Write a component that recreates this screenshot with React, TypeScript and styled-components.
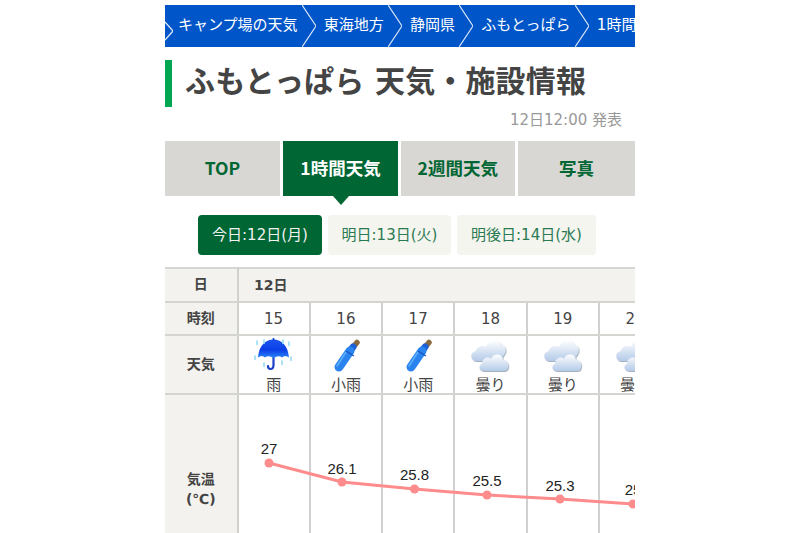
import { useId } from "react";
import styled, { createGlobalStyle } from "styled-components";

const Global = createGlobalStyle`
  html, body { margin: 0; padding: 0; background: #fff; }
  body { font-family: "DejaVu Sans", "Noto Sans CJK JP", sans-serif; color: #444; }
`

const Page = styled.div`
  width: 800px;
  height: 533px;
  overflow: hidden;
  display: flex;
  justify-content: center;
`

const Column = styled.main`
  width: 470px;
  padding-top: 5px;
  overflow: hidden;
`

const Crumbs = styled.nav`
  height: 42px;
  background: #0056c9;
  display: flex;
  align-items: center;
  white-space: nowrap;
  overflow: hidden;
  color: #fff;
  font-size: 15px;
`

const CrumbText = styled.span<{ $first?: boolean }>`
  margin: 0 4.25px 0 ${p => (p.$first ? '5px' : '8px')};
  line-height: 40px;
  height: 42px;
`

const Title = styled.h1`
  margin: 13px 0 0;
  height: 47px;
  border-left: 7px solid #00a651;
  padding-left: 13px;
  font-size: 30px;
  font-weight: 700;
  letter-spacing: 0.15px;
  line-height: 44px;
  color: #444;
  white-space: nowrap;
`

const Published = styled.p`
  margin: 4px 13px 0 0;
  height: 22px;
  text-align: right;
  font-size: 15px;
  line-height: 18px;
  color: #999;
`

const Tabs = styled.div`
  margin-top: 8px;
  display: grid;
  grid-template-columns: 115px 115px 113.5px 118px;
  gap: 3px;
`

const Tab = styled.div<{ $active?: boolean }>`
  position: relative;
  height: 55px;
  padding-bottom: 3px;
  box-sizing: border-box;
  display: flex;
  align-items: center;
  justify-content: center;
  font-family: "Noto Sans CJK JP", sans-serif;
  font-size: 17.5px;
  font-weight: 700;
  background: ${p => (p.$active ? '#006633' : '#d8d7d3')};
  color: ${p => (p.$active ? '#fff' : '#006633')};

  ${p => p.$active && `
    &::after {
      content: "";
      position: absolute;
      left: 50%;
      top: 100%;
      margin-left: -8px;
      border: 8px solid transparent;
      border-bottom: 0;
      border-top: 9px solid #006633;
    }
  `}
`

const Days = styled.div`
  margin-top: 19px;
  padding-left: 33px;
  display: flex;
  gap: 6px;
`

const Day = styled.div<{ $active?: boolean; $width: number }>`
  width: ${p => p.$width}px;
  height: 40px;
  padding-bottom: 3px;
  box-sizing: border-box;
  border-radius: 4px;
  display: flex;
  align-items: center;
  justify-content: center;
  font-size: 15px;
  background: ${p => (p.$active ? '#006633' : '#f4f5ee')};
  color: ${p => (p.$active ? '#f2f2f2' : '#2a7a52')};
`

const TableWrap = styled.div`
  position: relative;
  margin-top: 12px;
  overflow: hidden;
`

const Table = styled.table`
  table-layout: fixed;
  width: 507.1px;
  border-collapse: collapse;
  border-top: 2px solid #d6d6d2;
  font-size: 15px;
  color: #444;
`

const LabelCell = styled.th`
  width: 71.5px;
  padding: 0 0 2px;
  background: #f3f2ee;
  border-bottom: 2px solid #d4d4d0;
  border-right: 2px solid #d0d0cc;
  font-size: 14px;
  font-weight: 700;
  line-height: 20px;
  text-align: center;
  vertical-align: middle;
`

const DayCell = styled.td`
  height: 30px;
  padding: 0 0 2px 15.5px;
  background: #f3f2ee;
  border-bottom: 2px solid #d4d4d0;
  font-size: 14px;
  font-weight: 700;
`

const Cell = styled.td`
  width: 72.6px;
  padding: 0;
  text-align: center;
  border-bottom: 2px solid #d4d4d0;
  border-right: 2px solid #d0d0d0;
`

const HourRow = styled.tr`
  height: 33px;
`

const WeatherRow = styled.tr`
  height: 59px;
`

const TempRow = styled.tr`
  height: 192px;
`

const IconBox = styled.div`
  height: 37px;
  margin-top: 2px;
  display: flex;
  justify-content: center;
  line-height: 0;
`

const Condition = styled.div`
  height: 18px;
  font-size: 15px;
  line-height: 20px;
  color: #444;
`

const ChartLayer = styled.svg`
  position: absolute;
  left: 0;
  top: 0;
  pointer-events: none;
`

const ChartLabel = styled.text`
  font-family: "Liberation Sans", Arial, sans-serif;
  font-size: 15px;
  fill: #222;
  text-anchor: middle;
`

const Chevron = ({ first }: { first?: boolean }) =>
  first ? (
    <svg width="8" height="42" style={{ flex: 'none' }}>
      <path d="M0 17 L8 26 L0 35" fill="none" stroke="#dfe9f8" strokeWidth="1.2" />
    </svg>
  ) : (
    <svg width="14" height="42" style={{ flex: 'none' }}>
      <path d="M0 0 L14 21 L0 42" fill="none" stroke="#dfe9f8" strokeWidth="1.2" />
    </svg>
  )

const Umbrella = () => {
  const id = useId()
  return (
    <svg width="40" height="36" viewBox="0 0 40 36">
      <defs>
        <linearGradient id={id} x1="0" y1="0" x2="0" y2="1">
          <stop offset="0" stopColor="#1a55f0" />
          <stop offset="0.55" stopColor="#0a3ee6" />
          <stop offset="1" stopColor="#2f8af8" />
        </linearGradient>
      </defs>
      <path d="M19.5 18 V27 Q19.5 31 16.5 31 Q14 31 14 28" fill="none" stroke="#1a3fc8" strokeWidth="2.2" strokeLinecap="round" />
      <path d="M19.5 1.5 C28 1.5 34 8 35 19.5 Q31 16.5 28 19.5 Q24 16.5 19.5 20.5 Q15 16.5 11 19.5 Q8 16.5 4 19.5 C5 8 11 1.5 19.5 1.5 Z" fill={`url(#${id})`} />
      <path d="M19.5 0 V3" stroke="#0a3ee6" strokeWidth="1.6" />
      {[[3, 3], [35, 4], [1, 18], [37, 19], [10, 25], [28, 23], [10, 2], [29, 2]].map(([x, y], i) => (
        <path key={i} d={`M${x} ${y} v3.5`} stroke="#93ddf4" strokeWidth="1.6" strokeLinecap="round" />
      ))}
    </svg>
  )
}

const ClosedUmbrella = () => (
  <svg width="40" height="36" viewBox="0 0 40 36">
    <path d="M28 8 L31 4.5" stroke="#8a6b3c" strokeWidth="5.5" strokeLinecap="round" />
    <path d="M24 13 L27 9" stroke="#1d62d8" strokeWidth="7" strokeLinecap="round" />
    <path d="M13 29 L24 13" stroke="#2a84f0" strokeWidth="9" strokeLinecap="round" />
    <path d="M11 28 L20 14" stroke="#5cb0fb" strokeWidth="1.6" strokeLinecap="round" />
    <path d="M20 13 L28 18" stroke="#1450c4" strokeWidth="1.2" />
  </svg>
)

const Cloud = () => {
  const id = useId()
  return (
    <svg width="40" height="36" viewBox="0 0 40 36">
      <defs>
        <linearGradient id={id} x1="0" y1="0" x2="0" y2="1">
          <stop offset="0" stopColor="#fdfeff" />
          <stop offset="1" stopColor="#b4cbe8" />
        </linearGradient>
        <filter id={`${id}s`} x="-20%" y="-20%" width="140%" height="140%">
          <feDropShadow dx="0.6" dy="0.8" stdDeviation="0.7" floodColor="#6d7d92" floodOpacity="0.75" />
        </filter>
      </defs>
      <g filter={`url(#${id}s)`} fill={`url(#${id})`}>
        <path d="M5 23 C0 21 0 14 6 13 C7 8 13 7 16 9 C18 2 29 0 32 7 C36 8 37 13 34 17 L30 23 Z" />
        <path d="M14 33 C9 33 8 27 12 26 C12 20 18 18 21 21 C23 15 32 15 33 22 C38 22 40 28 37 32 Q36 33 34 33 Z" />
      </g>
    </svg>
  )
}

const crumbs = ['キャンプ場の天気', '東海地方', '静岡県', 'ふもとっぱら', '1時間天気']
const tabs = ['TOP', '1時間天気', '2週間天気', '写真']
const days = [
  { label: '今日:12日(月)', width: 124 },
  { label: '明日:13日(火)', width: 123 },
  { label: '明後日:14日(水)', width: 139 },
]
const hours = [
  { hour: 15, label: '雨', Icon: Umbrella },
  { hour: 16, label: '小雨', Icon: ClosedUmbrella },
  { hour: 17, label: '小雨', Icon: ClosedUmbrella },
  { hour: 18, label: '曇り', Icon: Cloud },
  { hour: 19, label: '曇り', Icon: Cloud },
  { hour: 20, label: '曇り', Icon: Cloud },
]

// x, dot y and label baseline, measured from the top left of the table
const temps = [
  { value: '27', x: 104, y: 196, base: 187 },
  { value: '26.1', x: 177, y: 215, base: 207 },
  { value: '25.8', x: 249.5, y: 222, base: 213 },
  { value: '25.5', x: 322, y: 228, base: 219 },
  { value: '25.3', x: 395, y: 232, base: 224 },
  { value: '25', x: 468, y: 237, base: 228 },
]

export default function App() {
  return (
    <Page>
      <Global />
      <Column>
        <Crumbs>
          {crumbs.map((c, i) => (
            <span key={c} style={{ display: 'contents' }}>
              <Chevron first={i === 0} />
              <CrumbText $first={i === 0}>{c}</CrumbText>
            </span>
          ))}
        </Crumbs>
        <Title>ふもとっぱら 天気・施設情報</Title>
        <Published>12日12:00 発表</Published>
        <Tabs>
          {tabs.map(t => (
            <Tab key={t} $active={t === '1時間天気'}>{t}</Tab>
          ))}
        </Tabs>
        <Days>
          {days.map((d, i) => (
            <Day key={d.label} $active={i === 0} $width={d.width}>{d.label}</Day>
          ))}
        </Days>
        <TableWrap>
          <Table>
            <tbody>
              <tr>
                <LabelCell>日</LabelCell>
                <DayCell colSpan={6}>12日</DayCell>
              </tr>
              <HourRow>
                <LabelCell>時刻</LabelCell>
                {hours.map(h => <Cell key={h.hour}>{h.hour}</Cell>)}
              </HourRow>
              <WeatherRow>
                <LabelCell>天気</LabelCell>
                {hours.map(h => (
                  <Cell key={h.hour}>
                    <IconBox><h.Icon /></IconBox>
                    <Condition>{h.label}</Condition>
                  </Cell>
                ))}
              </WeatherRow>
              <TempRow>
                <LabelCell>気温<br />(℃)</LabelCell>
                {hours.map(h => <Cell key={h.hour} />)}
              </TempRow>
            </tbody>
          </Table>
          <ChartLayer width="470" height="265">
            <polyline
              points={temps.map(t => `${t.x},${t.y}`).join(' ')}
              fill="none"
              stroke="#ff8c8c"
              strokeWidth="3"
            />
            {temps.map(t => (
              <g key={t.value}>
                <circle cx={t.x} cy={t.y} r="4.5" fill="#ff8c8c" />
                <ChartLabel x={t.x} y={t.base}>{t.value}</ChartLabel>
              </g>
            ))}
          </ChartLayer>
        </TableWrap>
      </Column>
    </Page>
  )
}
